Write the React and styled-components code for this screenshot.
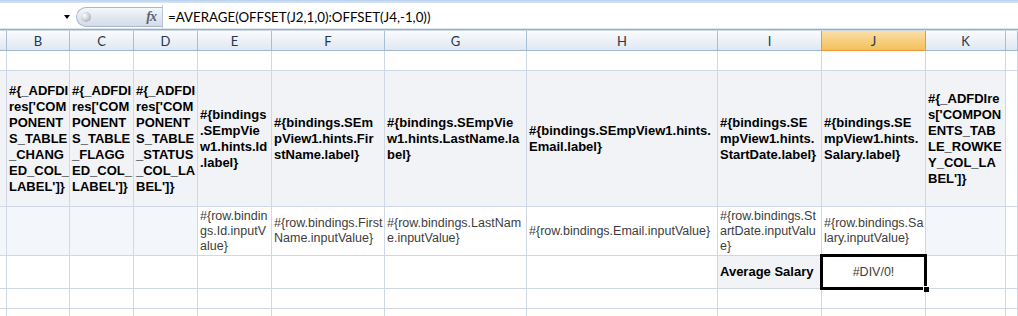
import React from 'react';
import styled, { createGlobalStyle } from 'styled-components';

const GlobalStyle = createGlobalStyle`
  html, body { margin: 0; padding: 0; background: #fff; overflow: hidden; }
  body { font-family: "Liberation Sans", Arial, sans-serif; }
`;

const Window = styled.div`
  width: 1018px;
  height: 316px;
  overflow: hidden;
  display: flex;
  flex-direction: column;
  background: #fff;
  & > * { flex-shrink: 0; }
`;

const TopStrip = styled.div`
  height: 3px;
  background: linear-gradient(#b9d1ec, #d9e7f7);
`;

const FormulaBar = styled.div`
  height: 25px;
  display: flex;
  align-items: stretch;
  background: #fff;
`;

const NameBox = styled.div`
  width: 74px;
  display: flex;
  align-items: center;
  justify-content: flex-end;
  padding-right: 4px;
  box-sizing: border-box;
`;

const DropArrow = styled.span`
  width: 0;
  height: 0;
  border-left: 3.5px solid transparent;
  border-right: 3.5px solid transparent;
  border-top: 4px solid #000;
  margin-top: 2px;
`;

const Pill = styled.div`
  margin: 4px 0 1px 2px;
  width: 86px;
  box-sizing: border-box;
  border: 1px solid #a9b8cc;
  border-right: none;
  border-radius: 10px 0 0 10px;
  background: linear-gradient(#f5f8fb, #e2e8f0 50%, #d3dce8);
  display: flex;
  align-items: center;
  justify-content: space-between;
  padding: 0 6px 0 4px;
`;

const RoundButton = styled.span`
  width: 10px;
  height: 10px;
  border-radius: 50%;
  background: radial-gradient(circle at 35% 35%, #ffffff, #c3c9d1 55%, #8f99a6);
`;

const FxLabel = styled.span`
  font-family: "Liberation Serif", "Times New Roman", serif;
  font-style: italic;
  font-weight: bold;
  font-size: 14px;
  color: #5d6573;
  letter-spacing: -1px;
`;

const Divider = styled.div`
  width: 1px;
  margin: 2px 0 0 0;
  background: #b8c6d8;
`;

const FormulaText = styled.div`
  flex: 1;
  display: flex;
  align-items: center;
  padding: 2px 0 0 5px;
  font-family: Lato, "Liberation Sans", sans-serif;
  font-size: 13.3px;
  color: #000;
  white-space: nowrap;
`;

const Separator = styled.div`
  height: 3px;
  background: linear-gradient(#dde5ef 0 1px, #9badc5 1px 2px, #cfd9e5 2px 3px);
`;

const Sheet = styled.div`
  display: grid;
  grid-template-columns: 7px 63px 64px 64px 74px 113px 142px 191px 104px 104px 80px 12px;
  grid-template-rows: 20px 20px 136px 49px 33px 20px 20px;
`;

const ColHead = styled.div`
  display: flex;
  align-items: center;
  justify-content: center;
  box-sizing: border-box;
  font-family: Lato, "Liberation Sans", sans-serif;
  font-size: 13px;
  color: #26364c;
  background: ${p => p.$selected
    ? 'linear-gradient(#fbe0ad, #f7cf7e 50%, #f1c15f)'
    : 'linear-gradient(#f9fbfd, #edf1f7 50%, #e1e8f2)'};
  border-right: 1px solid ${p => (p.$selected ? '#f29436' : '#a9bdd4')};
  border-bottom: 1px solid ${p => (p.$selected ? '#f29436' : '#9eb6ce')};
  box-shadow: ${p => (p.$selected ? '-1px 0 0 #f29436' : 'none')};
`;

const fills = {
  white: '#ffffff',
  head: '#f1f3f7',
  light: '#f3f6fb',
};

const Cell = styled.div`
  position: relative;
  display: flex;
  align-items: center;
  justify-content: ${p => (p.$center ? 'center' : 'flex-start')};
  box-sizing: border-box;
  padding: 0 2px;
  overflow: ${p => (p.$active ? 'visible' : 'hidden')};
  background: ${p => fills[p.$fill || 'white']};
  border-right: 1px solid #d0d7e5;
  border-bottom: 1px solid #d0d7e5;
  white-space: pre;
  font-size: ${p => (p.$bold ? '13px' : '12.5px')};
  line-height: ${p => (p.$bold ? '16px' : '15px')};
  font-weight: ${p => (p.$bold ? 'bold' : 'normal')};
  color: ${p => (p.$bold ? '#000' : '#3d3d3d')};
`;

const Selection = styled.div`
  position: absolute;
  top: -2px;
  left: -2px;
  right: -2px;
  bottom: -2px;
  border: 3px solid #000;
  z-index: 2;
  pointer-events: none;
`;

const FillHandle = styled.div`
  position: absolute;
  right: -5px;
  bottom: -5px;
  width: 5px;
  height: 5px;
  background: #000;
  border: 1px solid #fff;
  border-right: none;
  border-bottom: none;
`;

const columns = ['A', 'B', 'C', 'D', 'E', 'F', 'G', 'H', 'I', 'J', 'K', 'L'];
const headerLabels = { A: '', L: '' };

const rows = [
  {},
  {
    A: { fill: 'head' },
    B: { fill: 'head', bold: true, lines: ['#{_ADFDI', "res['COM", 'PONENT', 'S_TABLE', '_CHANG', 'ED_COL_', "LABEL']}"] },
    C: { fill: 'head', bold: true, lines: ['#{_ADFDI', "res['COM", 'PONENT', 'S_TABLE', '_FLAGG', 'ED_COL_', "LABEL']}"] },
    D: { fill: 'head', bold: true, lines: ['#{_ADFDI', "res['COM", 'PONENT', 'S_TABLE', '_STATUS', '_COL_LA', "BEL']}"] },
    E: { fill: 'head', bold: true, lines: ['#{bindings', '.SEmpVie', 'w1.hints.Id', '.label}'] },
    F: { fill: 'head', bold: true, lines: ['#{bindings.SEm', 'pView1.hints.Fir', 'stName.label}'] },
    G: { fill: 'head', bold: true, lines: ['#{bindings.SEmpVie', 'w1.hints.LastName.la', 'bel}'] },
    H: { fill: 'head', bold: true, lines: ['#{bindings.SEmpView1.hints.', 'Email.label}'] },
    I: { fill: 'head', bold: true, lines: ['#{bindings.SE', 'mpView1.hints.', 'StartDate.label}'] },
    J: { fill: 'head', bold: true, lines: ['#{bindings.SE', 'mpView1.hints.', 'Salary.label}'] },
    K: { fill: 'head', bold: true, lines: ['#{_ADFDIre', "s['COMPON", 'ENTS_TAB', 'LE_ROWKE', 'Y_COL_LA', "BEL']}"] },
  },
  {
    A: { fill: 'light' },
    B: { fill: 'light' },
    C: { fill: 'light' },
    D: { fill: 'light' },
    E: { lines: ['#{row.bindin', 'gs.Id.inputV', 'alue}'] },
    F: { lines: ['#{row.bindings.First', 'Name.inputValue}'] },
    G: { lines: ['#{row.bindings.LastNam', 'e.inputValue}'] },
    H: { lines: ['#{row.bindings.Email.inputValue}'] },
    I: { lines: ['#{row.bindings.St', 'artDate.inputValu', 'e}'] },
    J: { lines: ['#{row.bindings.Sa', 'lary.inputValue}'] },
    K: { fill: 'light' },
  },
  {
    I: { fill: 'head', bold: true, lines: ['Average Salary'] },
    J: { center: true, active: true, lines: ['#DIV/0!'] },
  },
  {},
  {},
];

export default function App() {
  return (
    <Window>
      <GlobalStyle />
      <TopStrip />
      <FormulaBar>
        <NameBox>
          <DropArrow />
        </NameBox>
        <Pill>
          <RoundButton />
          <FxLabel>fx</FxLabel>
        </Pill>
        <Divider />
        <FormulaText>=AVERAGE(OFFSET(J2,1,0):OFFSET(J4,-1,0))</FormulaText>
      </FormulaBar>
      <Separator />
      <Sheet>
        {columns.map(c => (
          <ColHead key={`h-${c}`} $selected={c === 'J'}>
            {c in headerLabels ? headerLabels[c] : c}
          </ColHead>
        ))}
        {rows.map((row, r) =>
          columns.map(c => {
            const cell = row[c] || {};
            return (
              <Cell
                key={`${r}-${c}`}
                $fill={cell.fill}
                $bold={cell.bold}
                $center={cell.center}
                $active={cell.active}
              >
                {cell.lines ? cell.lines.join('\n') : ''}
                {cell.active && (
                  <Selection>
                    <FillHandle />
                  </Selection>
                )}
              </Cell>
            );
          })
        )}
      </Sheet>
    </Window>
  );
}
